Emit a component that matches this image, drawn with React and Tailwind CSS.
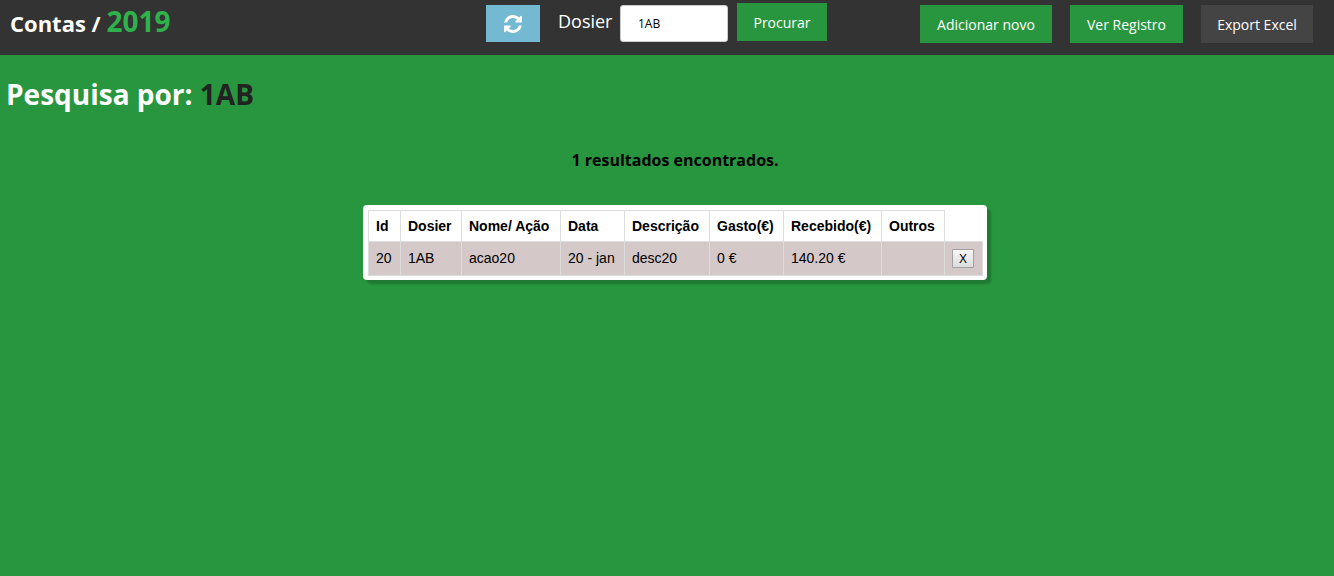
import { useState } from 'react';

const columns = [
  { name: 'Id', width: 'w-[32px]' },
  { name: 'Dosier', width: 'w-[61px]' },
  { name: 'Nome/ Ação', width: 'w-[99px]' },
  { name: 'Data', width: 'w-[64px]' },
  { name: 'Descrição', width: 'w-[85px]' },
  { name: 'Gasto(€)', width: 'w-[74px]' },
  { name: 'Recebido(€)', width: 'w-[98px]' },
  { name: 'Outros', width: 'w-[63px]' },
];
const rows = [['20', '1AB', 'acao20', '20 - jan', 'desc20', '0 €', '140.20 €', '']];

function RefreshIcon() {
  return (
    <svg viewBox="0 0 1536 1536" className="h-[18px] w-[18px]" fill="currentColor" aria-hidden="true">
      <path d="M1511 928q0 5-1 7-64 268-268 434.500t-478 166.500q-146 0-282.500-55t-243.500-157l-129 129q-19 19-45 19t-45-19-19-45v-448q0-26 19-45t45-19h448q26 0 45 19t19 45-19 45l-137 137q71 66 161 102t187 36q134 0 250-65t186-179q11-17 53-117 8-23 30-23h192q13 0 22.500 9.500t9.500 22.500zm25-800v448q0 26-19 45t-45 19h-448q-26 0-45-19t-19-45 19-45l138-138q-148-137-349-137-134 0-250 65t-186 179q-11 17-53 117-8 23-30 23h-199q-13 0-22.500-9.500t-9.500-22.500v-7q65-268 270-434.500t480-166.500q146 0 284 55.500t245 156.500l130-129q19-19 45-19t45 19 19 45z" />
    </svg>
  );
}

export default function App() {
  const [query, setQuery] = useState('1AB');
  return (
    <div className="min-h-screen bg-[#28963e] font-['Open_Sans','Noto_Sans',sans-serif]">
      <header className="flex h-[55px] items-start bg-[#333333] pr-[21px] pl-[10px] text-white">
        <h1 className="flex-1 pt-[3px] text-[22px] leading-9 font-bold">
          Contas / <span className="text-[28px] text-[#2fb24c]">2019</span>
        </h1>
        <form className="mr-[10px] flex items-start" onSubmit={(e) => e.preventDefault()}>
          <button type="button" aria-label="Atualizar" className="mt-[5px] flex h-[37px] w-[54px] items-center justify-center bg-[#74b9d2]">
            <RefreshIcon />
          </button>
          <label htmlFor="dosier" className="mt-[3px] ml-[18px] w-[52px] text-[18px] leading-9">Dosier</label>
          <input id="dosier" value={query} onChange={(e) => setQuery(e.target.value)} className="mt-[5px] ml-[10px] h-[37px] w-[108px] rounded-[3px] border border-[#cccccc] bg-white px-[17px] text-[12px] text-black" />
          <button className="mt-[3px] ml-[9px] h-[38px] w-[90px] bg-[#28963e] text-[14px]">Procurar</button>
        </form>
        <nav className="flex flex-1 justify-end gap-[18px] pt-[5px] text-[14px]">
          <button className="h-[38px] w-[132px] bg-[#28963e]">Adicionar novo</button>
          <button className="h-[38px] w-[113px] bg-[#28963e]">Ver Registro</button>
          <button className="h-[38px] w-[112px] bg-[#444444]">Export Excel</button>
        </nav>
      </header>
      <main>
        <h2 className="px-[6px] pt-5 text-[28px] leading-[38px] font-bold text-white">
          Pesquisa por: <span className="text-[#222222]">1AB</span>
        </h2>
        <p className="mt-[35px] pl-4 text-center text-[16px] leading-6 font-bold text-black">1 resultados encontrados.</p>
        <div className="mt-[33px] flex justify-center pl-4">
          <div className="rounded-[4px] bg-white pt-[5px] pr-1 pb-1 pl-[5px] shadow-[4px_4px_2px_rgba(0,0,0,0.2)]">
            <table className="w-[615px] table-fixed border-collapse font-['Liberation_Sans',sans-serif] text-[14px] text-black">
              <colgroup>
                {columns.map((c) => <col key={c.name} className={c.width} />)}
                <col className="w-[38px]" />
              </colgroup>
              <thead>
                <tr className="h-[31px]">
                  {columns.map((c) => <th key={c.name} className="border border-[#dddddd] px-[7px] text-left font-bold whitespace-nowrap">{c.name}</th>)}
                  <td />
                </tr>
              </thead>
              <tbody>
                {rows.map((r) => (
                  <tr key={r[0]} className="h-[34px] bg-[#d5c8c8]">
                    {r.map((v, i) => <td key={i} className="border border-[#dddddd] px-[7px] whitespace-nowrap">{v}</td>)}
                    <td className="border border-[#dddddd] px-[7px]">
                      <button className="block h-[19px] w-[22px] rounded-[1px] border border-[#a0a0a0] bg-linear-to-b from-[#f6f6f6] to-[#dddddd] text-[12px] leading-4">X</button>
                    </td>
                  </tr>
                ))}
              </tbody>
            </table>
          </div>
        </div>
      </main>
    </div>
  );
}
